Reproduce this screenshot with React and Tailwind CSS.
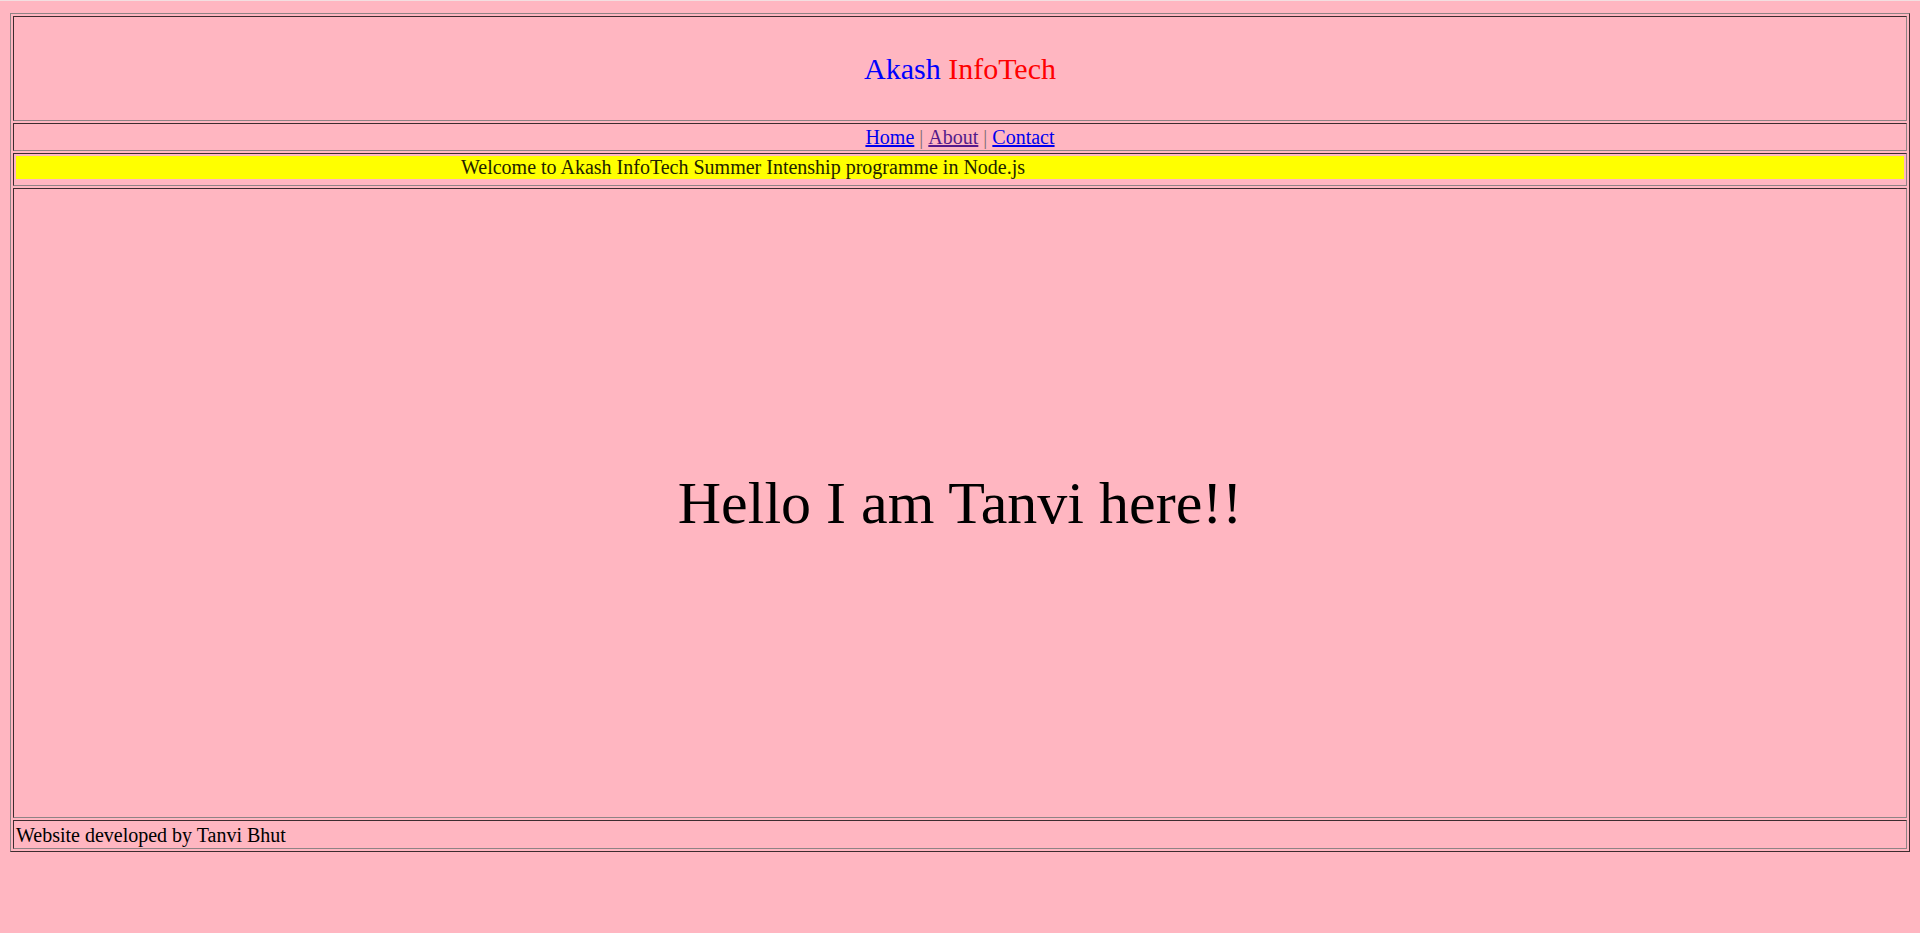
import React from 'react';

const serif = "font-['Liberation_Serif','Times_New_Roman',serif]";
const cell =
  'border border-t-[#3d2c2f] border-l-[#3d2c2f] border-r-[#8f8385] border-b-[#8f8385]';

const App = () => {
  return (
    <div className={`min-h-screen bg-[#ffb6c1] text-black ${serif}`}>
      <div className="h-px bg-[#f3dfe1]" />

      {/* Outer table */}
      <div className="mx-[10px] mt-[12px] flex flex-col gap-[2px] p-[2px] border border-t-[#8f8385] border-l-[#8f8385] border-r-[#3d2c2f] border-b-[#3d2c2f]">
        {/* Header */}
        <div className={`${cell} h-[105px] flex items-center justify-center text-[30px] leading-none`}>
          <span className="text-[#0000ff]">Akash</span>
          <span>&nbsp;</span>
          <span className="text-[#ff0000]">InfoTech</span>
        </div>

        {/* Nav */}
        <div className={`${cell} h-[28px] flex items-center justify-center text-[20px]`}>
          <a href="#" className="text-[#0000ee] underline">Home</a>
          <span className="text-[#7d6d70]">&nbsp;|&nbsp;</span>
          <a href="#" className="text-[#551a8b] underline">About</a>
          <span className="text-[#7d6d70]">&nbsp;|&nbsp;</span>
          <a href="#" className="text-[#0000ee] underline">Contact</a>
        </div>

        {/* Marquee */}
        <div className={`${cell} h-[33px] pt-[2px] px-[2px]`}>
          <div className="h-[23px] bg-[#ffff00] pl-[445px] text-[20px] leading-[23px] whitespace-nowrap text-[#222200]">
            Welcome to Akash InfoTech Summer Intenship programme in Node.js
          </div>
        </div>

        {/* Main */}
        <div className={`${cell} h-[630px] flex items-center justify-center text-[60px]`}>
          Hello I am Tanvi here!!
        </div>

        {/* Footer */}
        <div className={`${cell} h-[29px] flex items-center px-[2px] text-[20px]`}>
          Website developed by Tanvi Bhut
        </div>
      </div>
    </div>
  );
};

export default App;
